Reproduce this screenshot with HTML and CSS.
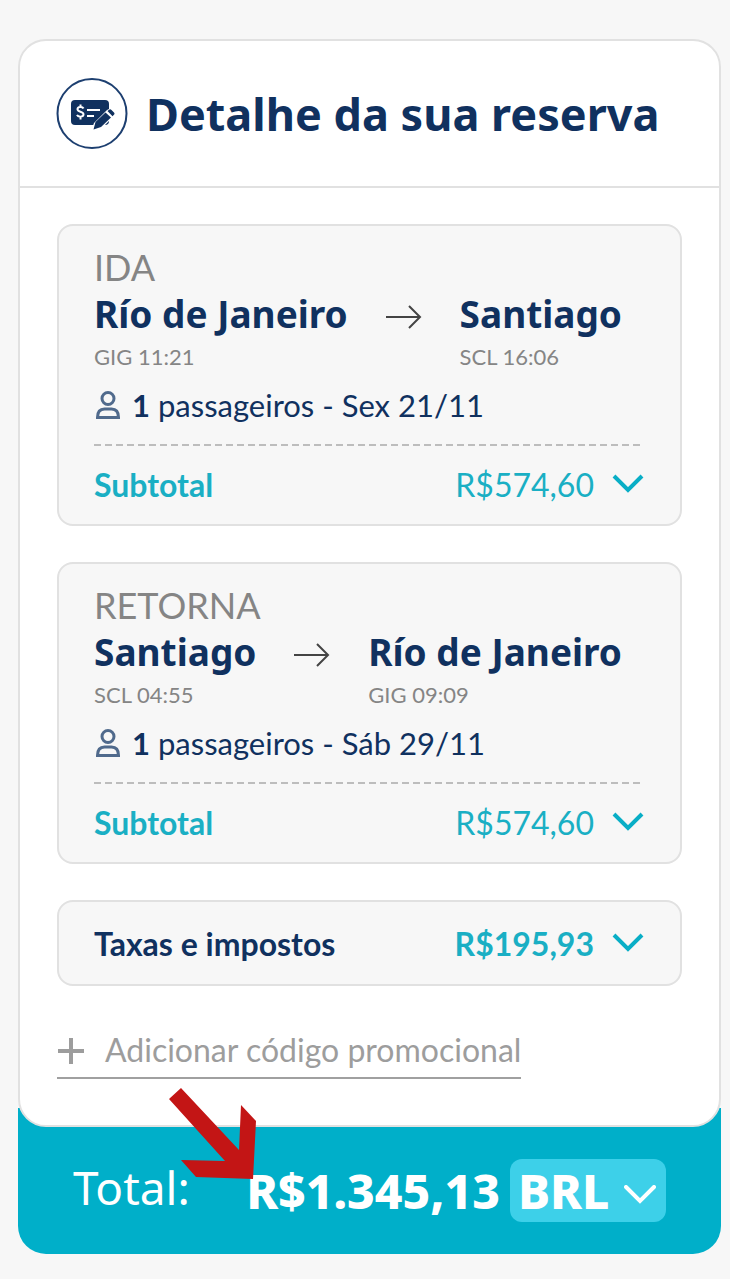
FILE: index.html
```html
<!DOCTYPE html>
<html lang="pt-BR">
<head>
    <meta charset="UTF-8">
    <meta name="viewport" content="width=device-width, initial-scale=1.0">
    <title>Detalhe da sua reserva</title>
    <link rel="stylesheet" href="styles.css">
</head>
<body>

    <main class="summary">
        <div class="card">
            <header class="card-header">
                <svg class="header-icon" viewBox="0 0 72 72" aria-hidden="true">
                    <circle cx="36" cy="35.500" r="34.500" fill="#fff" stroke="#1d3f70" stroke-width="2"/>
                    <rect x="15" y="22" width="38" height="25" rx="4" fill="#10315f"/>
                    <path d="M27.500 30.500c-1-2-6-2-6 .8 0 3 6 1.800 6 5 0 3-5.500 3-6.500.6M24.500 26.500v3M24.500 38.500v3" fill="none" stroke="#fff" stroke-width="2"/>
                    <path d="M31 32h13M31 38h7" stroke="#fff" stroke-width="2.200"/>
                    <path d="M35 53l3-8 13-13 4-2 5 5-3 4-12 12z" fill="#fff"/>
                    <path d="M37.500 51.500l2-7.500 10-9.500 5.500 5-10 9.500zM51.500 33l2-1.500q1-.5 2 .5l2.500 2.500q1 1 .2 2l-1.700 1.700z" fill="#10315f"/>
                </svg>
                <h1>Detalhe da sua reserva</h1>
            </header>

            <div class="card-body">
                <section class="box trip">
                    <h2>IDA</h2>
                    <div class="route">
                        <div>
                            <p class="city">Río de Janeiro</p>
                            <p class="time">GIG 11:21</p>
                        </div>
                        <svg class="arrow" viewBox="0 0 36 24" aria-hidden="true"><path d="M0 12h34M23 1l11 11-11 11"/></svg>
                        <div>
                            <p class="city">Santiago</p>
                            <p class="time">SCL 16:06</p>
                        </div>
                    </div>
                    <p class="passengers">
                        <svg class="person" viewBox="0 0 24 28" aria-hidden="true"><circle cx="12" cy="7.500" r="6"/><path d="M1.500 26.500q0-8.500 7-8.500h7q7 0 7 8.500z"/></svg>
                        <span><b>1</b> passageiros - Sex 21/11</span>
                    </p>
                    <button type="button" class="price-row subtotal">
                        <b>Subtotal</b>
                        <span class="price">R$574,60</span>
                        <svg class="chevron" viewBox="0 0 32 20" aria-hidden="true"><path d="M2 2l14 14L30 2"/></svg>
                    </button>
                </section>

                <section class="box trip">
                    <h2>RETORNA</h2>
                    <div class="route">
                        <div>
                            <p class="city">Santiago</p>
                            <p class="time">SCL 04:55</p>
                        </div>
                        <svg class="arrow" viewBox="0 0 36 24" aria-hidden="true"><path d="M0 12h34M23 1l11 11-11 11"/></svg>
                        <div>
                            <p class="city">Río de Janeiro</p>
                            <p class="time">GIG 09:09</p>
                        </div>
                    </div>
                    <p class="passengers">
                        <svg class="person" viewBox="0 0 24 28" aria-hidden="true"><circle cx="12" cy="7.500" r="6"/><path d="M1.500 26.500q0-8.500 7-8.500h7q7 0 7 8.500z"/></svg>
                        <span><b>1</b> passageiros - Sáb 29/11</span>
                    </p>
                    <button type="button" class="price-row subtotal">
                        <b>Subtotal</b>
                        <span class="price">R$574,60</span>
                        <svg class="chevron" viewBox="0 0 32 20" aria-hidden="true"><path d="M2 2l14 14L30 2"/></svg>
                    </button>
                </section>

                <section class="box">
                    <button type="button" class="price-row taxes">
                        <b>Taxas e impostos</b>
                        <b class="price">R$195,93</b>
                        <svg class="chevron" viewBox="0 0 32 20" aria-hidden="true"><path d="M2 2l14 14L30 2"/></svg>
                    </button>
                </section>

                <button type="button" class="promo">
                    <svg class="plus" viewBox="0 0 28 28" aria-hidden="true"><path d="M14 2v26M1 15h26"/></svg>
                    Adicionar código promocional
                </button>
            </div>
        </div>

        <footer class="total">
            <span class="total-label">Total:</span>
            <strong class="total-value">R$1.345,13</strong>
            <div class="currency">
                <select aria-label="Moeda">
                    <option>BRL</option>
                    <option>USD</option>
                </select>
                <svg class="chevron" viewBox="0 0 32 20" aria-hidden="true"><path d="M2 2l14 14L30 2"/></svg>
            </div>
            <svg class="pointer" viewBox="0 0 88 92" aria-hidden="true"><path d="M12 0l58 62 2-45 15 16-3 58-57-2-15-17 44 1L0 11z" fill="#c31515"/></svg>
        </footer>
    </main>

</body>
</html>
```
FILE: styles.css
```css
* {
    box-sizing: border-box;
}
body {
    margin: 0;
    padding: 39px 9px 24px 18px;
    background-color: #f7f7f7;
    font-family: Lato, "Liberation Sans", sans-serif;
    font-size: 32px;
    color: #10315f;
}
h1, h2, p {
    margin: 0;
}
button, select {
    font: inherit;
    border: none;
    background: none;
    cursor: pointer;
}
svg {
    display: block;
    flex: none;
    fill: none;
}
.card {
    position: relative;
    z-index: 1;
    background-color: white;
    border: 2px solid #e1e1e1;
    border-radius: 28px;
}
.card-header {
    display: flex;
    align-items: center;
    gap: 18px;
    height: 147px;
    padding: 0 36px;
    border-bottom: 2px solid #e1e1e1;
}
.header-icon {
    width: 72px;
    height: 72px;
}
h1 {
    font-family: "Noto Sans", sans-serif;
    font-size: 45px;
    font-weight: bold;
    white-space: nowrap;
}
.card-body {
    display: flex;
    flex-direction: column;
    align-items: flex-start;
    gap: 36px;
    padding: 36px 37px 46px;
}
.box {
    width: 100%;
    padding: 0 36px 0 35px;
    background-color: #f7f7f7;
    border: 2px solid #e1e1e1;
    border-radius: 16px;
}
.trip {
    padding-top: 18px;
}
h2 {
    font-size: 36px;
    font-weight: normal;
    line-height: 46px;
    color: #858585;
}
.route {
    display: flex;
    justify-content: space-between;
    padding-right: 22px;
}
.city {
    font-family: "Noto Sans", sans-serif;
    font-size: 37px;
    font-weight: bold;
    line-height: 48px;
    white-space: nowrap;
}
.time {
    font-size: 22px;
    line-height: 38px;
    color: #858585;
}
.arrow {
    width: 36px;
    height: 24px;
    margin-top: 15px;
    stroke: #444;
    stroke-width: 2;
}
.passengers {
    display: flex;
    align-items: center;
    gap: 12px;
    font-size: 31px;
    line-height: 58px;
}
.person {
    width: 24px;
    height: 28px;
    margin-left: 2px;
    stroke: #506a8c;
    stroke-width: 3;
}
.price-row {
    display: flex;
    align-items: center;
    width: 100%;
    height: 82px;
    padding: 0;
    color: #10315f;
}
.price {
    margin-left: auto;
    margin-right: 18px;
    color: #1aafc4;
}
.subtotal {
    height: 80px;
    margin-top: 10px;
    color: #1aafc4;
    background: repeating-linear-gradient(to right, #bdbdbd 0 7px, transparent 7px 11px) top / 100% 2px no-repeat;
}
.chevron {
    width: 32px;
    height: 20px;
    stroke: #09aec6;
    stroke-width: 4;
}
.promo {
    display: flex;
    align-items: center;
    gap: 20px;
    height: 57px;
    padding: 0;
    color: #9d9d9d;
    border-bottom: 2px solid #a0a0a0;
}
.plus {
    width: 28px;
    height: 28px;
    stroke: #9d9d9d;
    stroke-width: 4;
}
.total {
    position: relative;
    display: flex;
    align-items: center;
    height: 146px;
    margin-top: -19px;
    padding: 19px 55px 0;
    color: white;
    background-color: #00afc9;
    border-radius: 0 0 28px 28px;
}
.total-label {
    padding-bottom: 8px;
    font-family: "Noto Sans", sans-serif;
    font-size: 46px;
}
.total-value {
    margin-left: auto;
    margin-right: 10px;
    font-family: "Noto Sans", sans-serif;
    font-size: 48px;
    font-weight: 800;
}
.currency {
    position: relative;
    background-color: #3dd0e9;
    border-radius: 12px;
}
.currency select {
    display: block;
    appearance: none;
    width: 156px;
    height: 63px;
    padding: 0 8px;
    font-family: "Noto Sans", sans-serif;
    font-size: 48px;
    font-weight: 800;
    line-height: 63px;
    color: white;
}
.currency .chevron {
    position: absolute;
    top: 26px;
    right: 10px;
    stroke: white;
    stroke-linecap: round;
    pointer-events: none;
}
/* red arrow pointing at the total, drawn over the card */
.pointer {
    position: absolute;
    z-index: 2;
    top: -20px;
    left: 151px;
    width: 88px;
    height: 92px;
}
```
